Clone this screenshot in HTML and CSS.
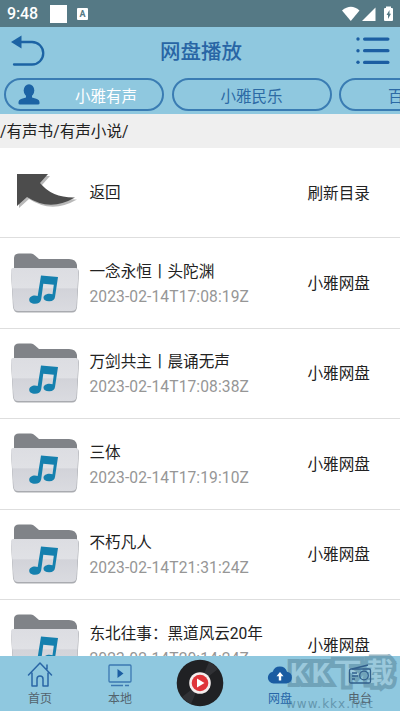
FILE: index.html
```html
<!DOCTYPE html>
<html lang="zh-CN">
<head>
<meta charset="utf-8">
<title>网盘播放</title>
<link rel="stylesheet" href="styles.css">
</head>
<body>
<svg width="0" height="0" class="defs">
  <defs>
    <linearGradient id="face" x1="0" y1="0" x2="0" y2="1">
      <stop offset="0" stop-color="#dcdde2"/><stop offset=".47" stop-color="#e0e1e5"/>
      <stop offset=".48" stop-color="#d2d3d9"/><stop offset="1" stop-color="#dadbe0"/>
    </linearGradient>
    <symbol id="folder" viewBox="0 0 70 62">
      <path fill="#808388" d="M4 18V6q0-4.500 5-4.500h12q2 0 4 2l4 3.500h30q7 0 8 6v8H4z"/>
      <path fill="#a9abb0" d="M4 17h62q3 0 3 3l-2 35q-.5 5.500-5 5.500H8q-4 0-5-5.500L1 20q0-3 3-3z"/>
      <path fill="url(#face)" d="M3 16h62.500q3 0 3 3l-2 35.500q-.5 4.500-5 4.500H8q-4 0-4.500-4.500L1 19q0-3 2-3z"/>
      <path transform="translate(-.5 -.5)" fill="#1580ae" fill-rule="evenodd" d="M31.500 24l17 1.500-3 20q-.5 4-5.500 4.300c-3.500.2-6-1.300-6-3.500 0-3.300 5-5 9-3.500l1.300-9.600-10.500-1-2.100 15.500c-.5 3-3 4.500-6.200 4.500-3.500 0-5.800-1.600-5.800-4 0-3.300 4.500-5.200 8.500-3.700z"/>
    </symbol>
  </defs>
</svg>
<div class="screen">
  <div class="status">
    <span class="clock">9:48</span><span class="block"></span><span class="badge">A</span>
    <svg class="signals" width="52" height="18" viewBox="0 0 52 18" fill="#fff">
      <path d="M0 5.500Q9-2 17.500 5.500L8.800 16z"/><path d="M33.500 2.500V16H20z"/>
      <path d="M44 1.500h5v1.500h1q1 0 1 1v11q0 1-1 1h-7q-1 0-1-1V4q0-1 1-1h1z"/>
      <path fill="#557985" d="M47.500 5l-3 5H46v4l3-5.200h-1.500z"/>
    </svg>
  </div>
  <header class="header">
    <svg width="36" height="32" viewBox="0 0 36 32"><path d="M10 7h11a11 11 0 0 1 0 22.500H3" fill="none" stroke="#1c63a4" stroke-width="2.300" stroke-linecap="round"/><path fill="#1c63a4" d="M0 7L10.500.5v13z"/></svg>
    <h1>网盘播放</h1>
    <svg width="34" height="30" viewBox="0 0 34 30" fill="#1c5ea2"><circle cx="2" cy="3" r="1.700"/><circle cx="2" cy="14.700" r="1.700"/><circle cx="2" cy="26.300" r="1.700"/><rect x="7" y="1.400" width="26.500" height="3.300" rx="1.600"/><rect x="7" y="13" width="26.500" height="3.300" rx="1.600"/><rect x="7" y="24.700" width="26.500" height="3.300" rx="1.600"/></svg>
  </header>
  <nav class="tabs">
    <div class="pill active"><svg width="22" height="21" viewBox="0 0 22 21" fill="#1c63a4"><ellipse cx="11" cy="6.500" rx="5.300" ry="6.300"/><path d="M8 11h6v2.500l5 1.500q2.500 1 2.500 3v1.500q0 1-1.500 1H2q-1.500 0-1.500-1V18q0-2 2.500-3l5-1.500z"/></svg><span>小雅有声</span></div>
    <div class="pill"><span>小雅民乐</span></div>
    <div class="pill"><span>百度网盘</span></div>
  </nav>
  <div class="path">/有声书/有声小说/</div>
  <main class="list">
    <div class="row back">
      <svg class="arrow" width="62" height="37" viewBox="0 0 62 37"><path fill="#b9b9b9" transform="translate(2 2)" d="M0 0h31l-8 9q12 15 35 14.500Q33 38 10 23L0 32z"/><path fill="#4c4c4c" d="M0 0h31l-8 9q12 15 35 14.500Q33 38 10 23L0 32z"/></svg>
      <div class="info"><div class="name">返回</div></div><div class="source">刷新目录</div>
    </div>
    <div class="row"><svg class="folder"><use href="#folder"/></svg><div class="info"><div class="name">一念永恒丨头陀渊</div><div class="date">2023-02-14T17:08:19Z</div></div><div class="source">小雅网盘</div></div>
    <div class="row"><svg class="folder"><use href="#folder"/></svg><div class="info"><div class="name">万剑共主丨晨诵无声</div><div class="date">2023-02-14T17:08:38Z</div></div><div class="source">小雅网盘</div></div>
    <div class="row"><svg class="folder"><use href="#folder"/></svg><div class="info"><div class="name">三体</div><div class="date">2023-02-14T17:19:10Z</div></div><div class="source">小雅网盘</div></div>
    <div class="row"><svg class="folder"><use href="#folder"/></svg><div class="info"><div class="name">不朽凡人</div><div class="date">2023-02-14T21:31:24Z</div></div><div class="source">小雅网盘</div></div>
    <div class="row"><svg class="folder"><use href="#folder"/></svg><div class="info"><div class="name">东北往事：黑道风云20年</div><div class="date">2023-02-14T20:14:24Z</div></div><div class="source">小雅网盘</div></div>
  </main>
  <footer class="bottom">
    <div class="watermark"><b>KK下载</b><i>www.kkx.net</i></div>
    <div class="item"><svg width="26" height="26" viewBox="0 0 26 26" fill="none" stroke="#2a66a6" stroke-width="1.500" stroke-linejoin="round" stroke-linecap="round"><path d="M1.500 14L13 2l11.500 12M5 12v13h5v-7q0-3 3-3t3 3v7h5V12M20 8V4"/></svg><span>首页</span></div>
    <div class="item"><svg width="26" height="26" viewBox="0 0 26 26" fill="none" stroke="#3c78b2" stroke-width="1.300"><rect x="2" y="4" width="22" height="17" rx="1"/><path d="M4 24.500h12M18 24.500h4"/><path fill="#1c5ea2" stroke="none" d="M10.500 8v9l6-4.500z"/></svg><span>本地</span></div>
    <div class="item disc"><svg width="48" height="48" viewBox="0 0 48 48"><circle cx="24" cy="24" r="23.300" fill="#202124"/><path fill="#303135" d="M24 24L33 3a23 23 0 0 1 9 7zM24 24L6 38a23 23 0 0 0 9 7z"/><circle cx="24" cy="24" r="10.800" fill="#f5eeee"/><circle cx="24" cy="24" r="8.300" fill="#df3439"/><path fill="#fff" d="M21 19.500v9l7.500-4.500z"/></svg></div>
    <div class="item current"><svg width="26" height="26" viewBox="0 0 26 26"><path fill="#1a5ca2" d="M6.500 22.500a5.900 5.900 0 0 1-.8-11.700A7.500 7.500 0 0 1 20 10.800 5.900 5.900 0 0 1 19.500 22.500z"/><path fill="#fff" d="M13 11l3.500 4.200h-2.300v4.300h-2.400v-4.300H9.500z"/></svg><span>网盘</span></div>
    <div class="item"><svg width="26" height="26" viewBox="0 0 26 26" fill="none" stroke="#315f8c" stroke-width="1.300"><rect x="2.500" y="8" width="21" height="14" rx="1.500"/><circle cx="17" cy="14.500" r="4.300"/><path d="M5 12h5M5 15h6M5 18h3M5 8l16-4"/></svg><span>电台</span></div>
  </footer>
</div>
</body>
</html>
```

FILE: styles.css
```css
* { box-sizing: border-box; }
body { margin: 0; font-family: Roboto, "Noto Sans CJK SC", sans-serif; color: #222; }
.defs { position: absolute; }
.screen { width: 400px; height: 711px; display: flex; flex-direction: column; overflow: hidden; background: #fff; }
.status { flex: none; height: 27px; background: #557985; display: flex; align-items: center; padding: 1px 6px 0 7px; color: #fff; }
.clock { font-size: 16px; line-height: 20px; font-weight: 500; width: 43px; letter-spacing: -.1px; }
.block { width: 17px; height: 18px; background: #fff; }
.badge { width: 11px; height: 12px; margin-left: 10px; border-radius: 1px; background: #fff; color: #557985; font-size: 9px; line-height: 12px; font-weight: 700; text-align: center; }
.signals { margin-left: auto; }
.header { flex: none; height: 48px; background: #8fc8df; display: flex; align-items: center; justify-content: space-between; padding: 0 10px 0 11px; }
.header h1 { margin: 1px 1px 0 0; font-size: 20.500px; line-height: 30px; font-weight: 500; color: #2865a5; }
.tabs { flex: none; height: 39px; background: #8fc8df; display: flex; gap: 7.500px; padding: 3px 0 3px 4px; overflow: hidden; }
.pill { flex: none; width: 160px; height: 33px; border: 2px solid #3a7cb3; border-radius: 17px; display: flex; align-items: center; justify-content: center; color: #2c6aa5; font-size: 15.500px; }
.pill.active { justify-content: flex-start; padding-left: 12px; gap: 35px; color: #fff; }
.path { flex: none; height: 34px; background: #efefef; font-size: 15.600px; line-height: 37px; }
.list { flex: 1; min-height: 0; overflow: hidden; }
.row { height: 90.400px; border-bottom: 1.500px solid #dedede; display: flex; align-items: center; padding-left: 10px; }
.folder { flex: none; width: 70px; height: 62px; margin-top: -1px; }
.arrow { flex: none; margin-left: 7px; margin-right: 1px; margin-top: -1px; }
.info { width: 218px; margin-left: 9.500px; }
.row:not(.back) .info { padding-top: 3px; }
.name { font-size: 15.600px; line-height: 26px; white-space: nowrap; }
.date { font-size: 15.600px; line-height: 25px; color: #969696; letter-spacing: .1px; }
.source { font-size: 15.600px; line-height: 26px; padding-top: 2px; }
.bottom { flex: none; height: 55px; background: #8fc8df; display: flex; position: relative; }
.item { flex: 1; display: flex; flex-direction: column; align-items: center; padding-top: 5px; font-size: 12px; line-height: 17px; color: #53636d; position: relative; }
.item svg { flex: none; }
.item.disc { padding-top: 3px; }
.item span { margin-top: 3.500px; }
.item.current { color: #2665a8; }
.watermark { position: absolute; left: 286px; top: 0; width: 114px; height: 55px; color: #a4cbdb; opacity: .6; pointer-events: none; }
.watermark b { display: block; font-size: 28px; line-height: 36px; font-weight: 700; white-space: nowrap; letter-spacing: 4px; padding-left: 4px; -webkit-text-stroke: 8px #5d8ba1; paint-order: stroke fill; }
.watermark i { display: block; font-family: "DejaVu Sans", sans-serif; font-style: normal; font-size: 12px; line-height: 14px; letter-spacing: 1px; padding-top: 5px; color: #47768e; }
```
